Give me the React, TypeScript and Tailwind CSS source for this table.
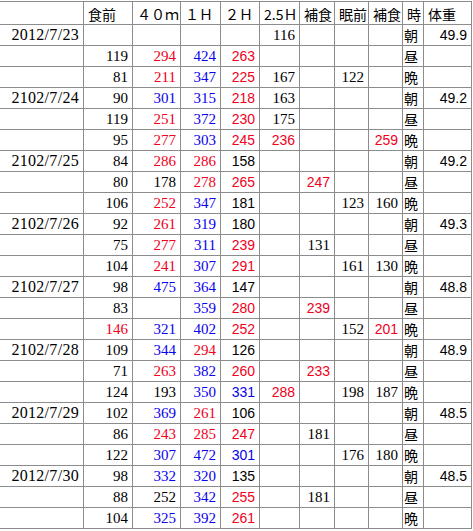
import React from "react";

// column widths incl. right grid line
const cols = "grid-cols-[84px_49px_48px_40px_39px_40px_35px_34px_34px_21px_48px]";

const headers = ["", "食前", "４０ｍ", "１Ｈ", "２Ｈ", "2.5Ｈ", "補食", "眠前", "補食", "時", "体重"];

// values: 食前, 40m, 1H, 2H, 2.5H, 補食, 眠前, 補食  (suffix r = red, b = blue)
const days = [
    { date: "2012/7/23", weight: "49.9", rows: [
        ["", "", "", "", "116", "", "", ""],
        ["119", "294r", "424b", "263r", "", "", "", ""],
        ["81", "211r", "347b", "225r", "167", "", "122", ""],
    ] },
    { date: "2102/7/24", weight: "49.2", rows: [
        ["90", "301b", "315b", "218r", "163", "", "", ""],
        ["119", "251r", "372b", "230r", "175", "", "", ""],
        ["95", "277r", "303b", "245r", "236r", "", "", "259r"],
    ] },
    { date: "2102/7/25", weight: "49.2", rows: [
        ["84", "286r", "286r", "158", "", "", "", ""],
        ["80", "178", "278r", "265r", "", "247r", "", ""],
        ["106", "252r", "347b", "181", "", "", "123", "160"],
    ] },
    { date: "2102/7/26", weight: "49.3", rows: [
        ["92", "261r", "319b", "180", "", "", "", ""],
        ["75", "277r", "311b", "239r", "", "131", "", ""],
        ["104", "241r", "307b", "291r", "", "", "161", "130"],
    ] },
    { date: "2102/7/27", weight: "48.8", rows: [
        ["98", "475b", "364b", "147", "", "", "", ""],
        ["83", "", "359b", "280r", "", "239r", "", ""],
        ["146r", "321b", "402b", "252r", "", "", "152", "201r"],
    ] },
    { date: "2102/7/28", weight: "48.9", rows: [
        ["109", "344b", "294r", "126", "", "", "", ""],
        ["71", "263r", "382b", "260r", "", "233r", "", ""],
        ["124", "193", "350b", "331b", "288r", "", "198", "187"],
    ] },
    { date: "2012/7/29", weight: "48.5", rows: [
        ["102", "369b", "261r", "106", "", "", "", ""],
        ["86", "243r", "285r", "247r", "", "181", "", ""],
        ["122", "307b", "472b", "301b", "", "", "176", "180"],
    ] },
    { date: "2012/7/30", weight: "48.5", rows: [
        ["98", "332b", "320b", "135", "", "", "", ""],
        ["88", "252", "342b", "255r", "", "181", "", ""],
        ["104", "325b", "392b", "261r", "", "", "", ""],
    ] },
];

const times = ["朝", "昼", "晩"];

const serif = "font-['Liberation_Serif','Noto_Sans_CJK_JP',serif] text-[15px]";
const sans = "font-['Liberation_Sans','Noto_Sans_CJK_JP',sans-serif] text-[14px]";
const cjk = "font-['Noto_Sans_CJK_JP',sans-serif] text-[14px]";

const Cell: React.FC<{ raw: string; col: number }> = ({ raw, col }) => {
    const last = raw.slice(-1);
    const color = last === "r" ? "r" : last === "b" ? "b" : "k";
    const text = color === "k" ? raw : raw.slice(0, -1);
    const isSans = col === 4 || (color !== "k" && col >= 5 && col <= 8);
    return (
        <div
            className={`flex items-center justify-end pr-1 border-r border-b border-[#8c8c8c] ${
                isSans ? sans : serif
            } ${color === "r" ? "text-[#f0001c]" : color === "b" ? "text-[#0a00f0]" : "text-black"}`}
        >
            {text}
        </div>
    );
};

export default function App() {
    return (
        <div className="bg-white w-[473px] h-[531px] overflow-hidden pt-px">
            <div className={`grid ${cols} grid-rows-[24px] auto-rows-[21px] leading-none`}>
                {headers.map((h, i) => (
                    <div
                        key={i}
                        className={`flex items-center pl-1 pt-px border-t border-r border-b border-[#8c8c8c] text-black ${cjk} ${
                            i === 9 ? "pl-0" : ""
                        }`}
                    >
                        {h}
                    </div>
                ))}

                {days.map((d) =>
                    d.rows.map((r, ri) => (
                        <React.Fragment key={d.date + ri}>
                            <div className="flex items-center justify-end pr-1 border-r border-b border-[#8c8c8c] text-black font-['Liberation_Serif',serif] text-[16px] tracking-[0.3px]">
                                {ri === 0 ? d.date : ""}
                            </div>
                            {r.map((v, ci) => (
                                <Cell key={ci} raw={v} col={ci + 1} />
                            ))}
                            <div className={`flex items-center pl-px border-r border-b border-[#8c8c8c] text-black ${cjk}`}>
                                {times[ri]}
                            </div>
                            <div className={`flex items-center justify-end pr-1 border-r border-b border-[#8c8c8c] text-black ${sans}`}>
                                {ri === 0 ? d.weight : ""}
                            </div>
                        </React.Fragment>
                    ))
                )}
            </div>
        </div>
    );
}
